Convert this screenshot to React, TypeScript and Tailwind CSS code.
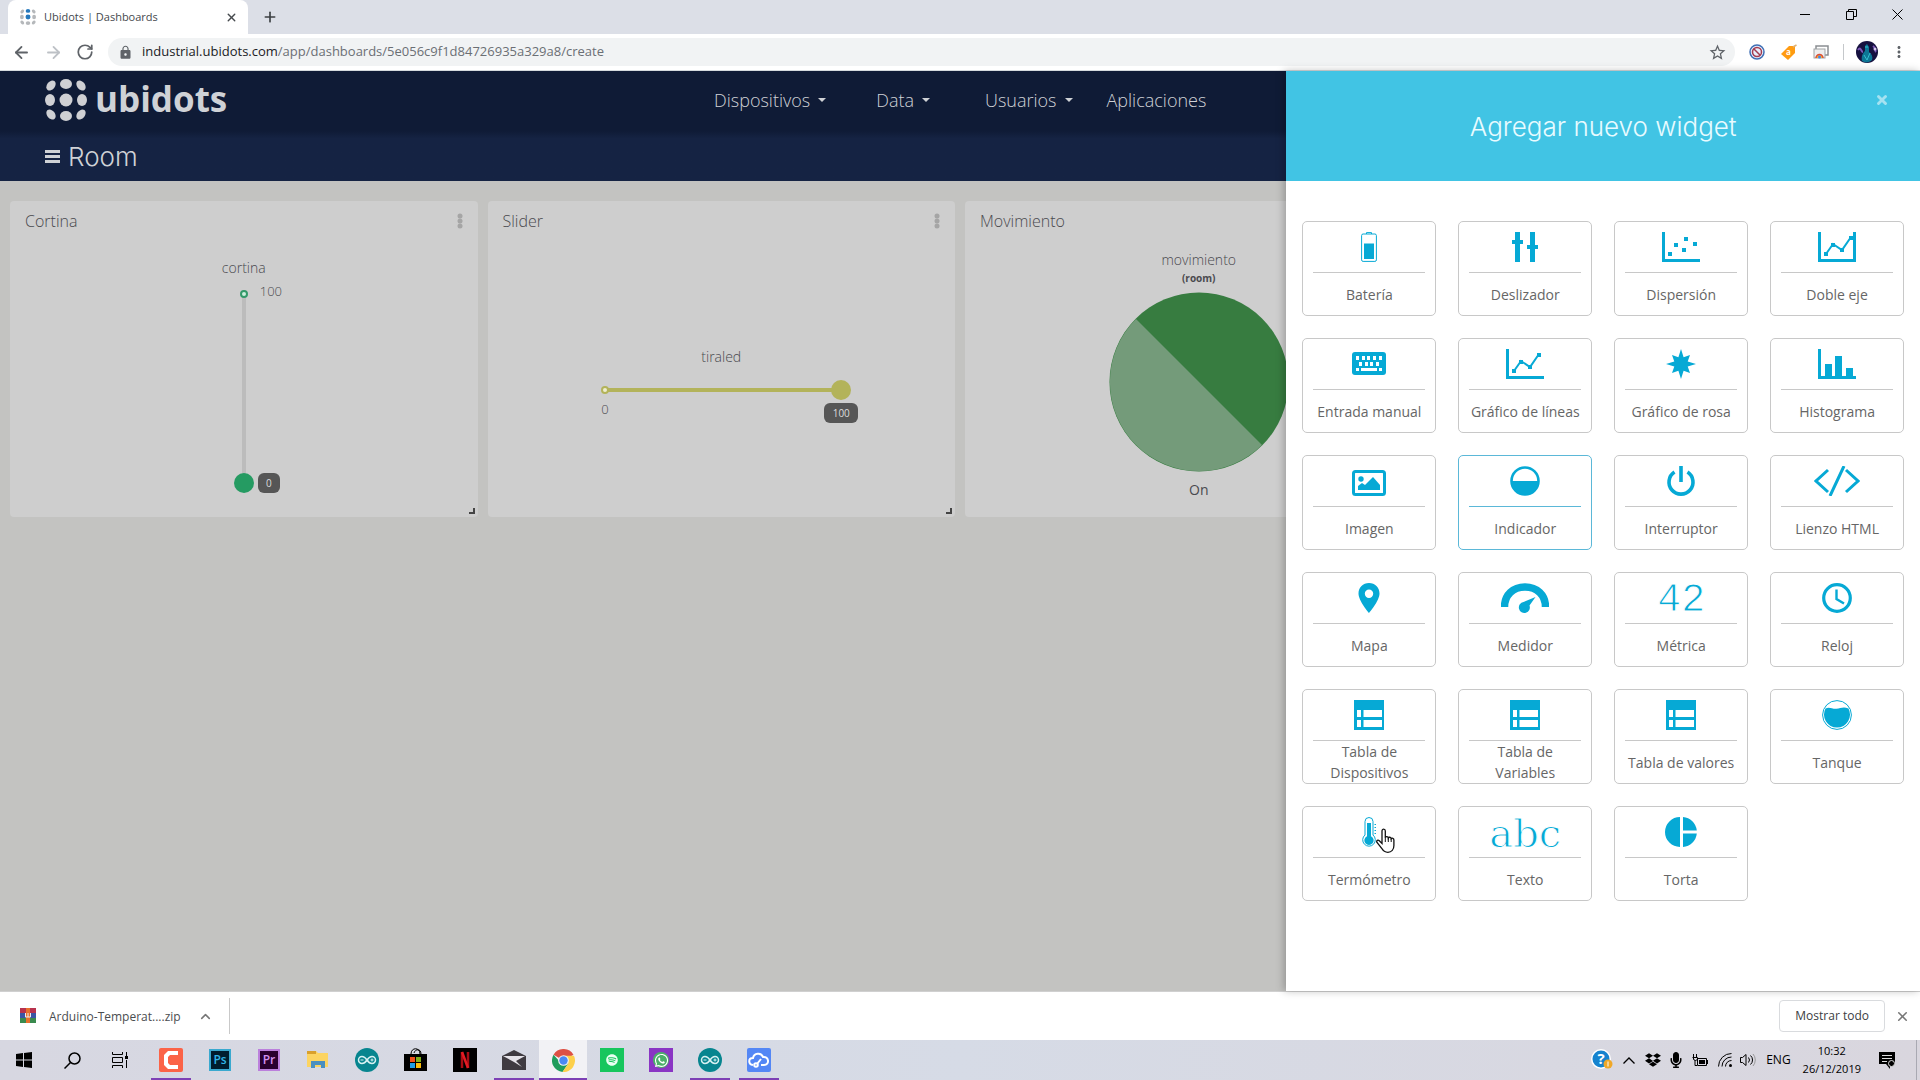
import type { ReactNode } from 'react';
import { FaDropbox, FaMicrophone, FaSpotify, FaWhatsapp } from 'react-icons/fa';
import { MdLock, MdMoreVert, MdStarBorder } from 'react-icons/md';
import { ArrowLeft, ArrowRight, ChevronUp, Plus, RotateCw, X } from 'lucide-react';

/* ---------- Widget icons ---------- */

const BatteryIcon = () => (
  <svg width="16" height="30" viewBox="0 0 16 30" fill="none" stroke="currentColor">
    <path d="M5.5 2V.6h5V2" />
    <rect x=".6" y="2" width="14.8" height="27.4" rx="1.5" />
    <rect x="3" y="11.5" width="10" height="15.5" fill="currentColor" stroke="none" />
  </svg>
);

const SlidersIcon = () => (
  <svg width="26" height="30" viewBox="0 0 26 30" fill="currentColor">
    <path d="M3 0h5v8h3v4H8v18H3V12H0V8h3zM18 0h5v13h3v4h-3v13h-5V17h-3v-4h3z" />
  </svg>
);

const ScatterIcon = () => (
  <svg width="38" height="30" viewBox="0 0 38 30" fill="currentColor">
    <path d="M0 0h3v27h35v3H0z" />
    <path d="M6 20h4v4H6zM12 11h4v4h-4zM20 16h4v4h-4zM22 5h4v4h-4zM31 10h4v4h-4z" />
  </svg>
);

const TrendLine = () => (
  <>
    <path d="M8 22 15 12l9 6 9-13" fill="none" stroke="currentColor" strokeWidth="2" />
    <path d="M6 20h4v4H6zM13 11h4v4h-4zM22 16h4v4h-4zM31 4h4v4h-4z" />
  </>
);

const DoubleAxisIcon = () => (
  <svg width="38" height="30" viewBox="0 0 38 30" fill="currentColor">
    <path d="M0 0h3v27h32V0h3v30H0z" />
    <TrendLine />
  </svg>
);

const LineChartIcon = () => (
  <svg width="38" height="30" viewBox="0 0 38 30" fill="currentColor">
    <path d="M0 0h3v27h35v3H0z" />
    <TrendLine />
  </svg>
);

const KeyboardIcon = () => (
  <svg width="34" height="30" viewBox="0 0 34 30">
    <rect y="3" width="34" height="23" rx="3" fill="currentColor" />
    <path
      fill="#fff"
      d="M4 7h3v4H4zM10 7h3v4h-3zM15 7h3v4h-3zM21 7h3v4h-3zM27 7h3v4h-3zM7 13h3v4H7zM13 13h3v4h-3zM18 13h3v4h-3zM24 13h3v4h-3zM4 19h3v3H4zM9 19h16v3H9zM27 19h3v3h-3z"
    />
  </svg>
);

const RoseIcon = () => (
  <svg width="30" height="30" viewBox="0 0 30 30" fill="currentColor">
    <path d="m15 0 2.600 8.300L24 6l-2.300 6.400L30 15l-8.300 2.600L24 24l-6.400-2.300L15 30l-2.600-8.300L6 24l2.300-6.400L0 15l8.300-2.600L6 6l6.400 2.300z" />
  </svg>
);

const HistogramIcon = () => (
  <svg width="38" height="30" viewBox="0 0 38 30" fill="currentColor">
    <path d="M0 0h3v27h4V15h7v12h3V7h7v20h4v-8h7v8h3v3H0z" />
  </svg>
);

const ImageIcon = () => (
  <svg width="34" height="30" viewBox="0 0 34 30" fill="currentColor">
    <rect x="1.500" y="5.500" width="31" height="23" rx="2" fill="none" stroke="currentColor" strokeWidth="3" />
    <circle cx="9" cy="13" r="2.700" />
    <path d="M6 24v-4l4-3 3 2 8-8 7 8v5z" />
  </svg>
);

const HalfCircleIcon = () => (
  <svg width="30" height="30" viewBox="0 0 30 30" fill="currentColor">
    <circle cx="15" cy="15" r="13.500" fill="none" stroke="currentColor" strokeWidth="2.600" />
    <path d="M1 15h28a14 14 0 0 1-28 0z" />
  </svg>
);

const PowerIcon = () => (
  <svg width="30" height="30" viewBox="0 0 30 30" fill="none" stroke="currentColor" strokeWidth="3.600">
    <path d="M15 0v16M8.500 6a12 12 0 1 0 13 0" />
  </svg>
);

const CodeIcon = () => (
  <svg width="46" height="30" viewBox="0 0 46 30" fill="none" stroke="currentColor" strokeWidth="3">
    <path d="M14 4 2 15l12 11M32 4l12 11-12 11M30 0 16 30" />
  </svg>
);

const PinIcon = () => (
  <svg width="22" height="30" viewBox="0 0 22 30" fill="currentColor">
    <path
      fillRule="evenodd"
      d="M11 0C5 0 .5 4.500.5 10.500.5 18 11 30 11 30s10.500-12 10.500-19.500C21.500 4.500 17 0 11 0zm0 6.500a4.200 4.200 0 1 1 0 8.400 4.200 4.200 0 0 1 0-8.400z"
    />
  </svg>
);

const GaugeIcon = () => (
  <svg width="48" height="30" viewBox="0 0 48 30" fill="currentColor">
    <path d="M3.500 24C3.500 12 12 4 24 4s20.500 8 20.500 20" fill="none" stroke="currentColor" strokeWidth="7.500" />
    <path d="M34.500 14 28.500 22.500a5.500 5.500 0 1 1-6-3.500z" />
  </svg>
);

const ClockIcon = () => (
  <svg width="30" height="30" viewBox="0 0 30 30" fill="none" stroke="currentColor">
    <circle cx="15" cy="15" r="13.300" strokeWidth="3.200" />
    <path d="M14.500 6.500V16l7.500 4.500" strokeWidth="2.400" />
  </svg>
);

const TableIcon = () => (
  <svg width="30" height="30" viewBox="0 0 30 30" fill="currentColor">
    <path fillRule="evenodd" d="M0 0h30v30H0zM3 10v7h4v-7zM9.500 10v7H28v-7zM3 20v7h4v-7zM9.500 20v7H28v-7z" />
  </svg>
);

const TankIcon = () => (
  <svg width="30" height="30" viewBox="0 0 30 30" fill="currentColor">
    <circle cx="15" cy="15" r="14.400" fill="none" stroke="currentColor" />
    <path d="M3.500 8.500c4-2 7 .8 11 .3s7-2.300 12-.3A13 13 0 1 1 3.500 8.500z" />
  </svg>
);

const ThermometerIcon = () => (
  <svg width="16" height="30" viewBox="0 0 16 30" fill="none" stroke="currentColor">
    <path d="M4 18V4.500a4 4 0 0 1 8 0V18a6.300 6.300 0 1 1-8 0z" />
    <path d="M6 6h4v13.200a4.600 4.600 0 1 1-4 0z" fill="currentColor" stroke="none" />
    <path d="M13.500 7.500H15M13.500 10.500H15M13.500 13.500H15M13.500 16.500H15" />
  </svg>
);

const PieIcon = () => (
  <svg width="32" height="30" viewBox="0 0 32 30" fill="currentColor">
    <path d="M15 0v30A15 15 0 0 1 15 0zM18 0a15 15 0 0 1 13.800 13.500H18zM18 16.500h13.800A15 15 0 0 1 18 30z" />
  </svg>
);

const HandCursor = () => (
  <svg width="19" height="25" viewBox="0 0 19 25" className="pointer-events-none absolute left-[73px] top-[21px]">
    <path
      d="M6 15.500V3c0-2.500 3.300-2.500 3.300 0v6.500c.4-1.300 2.800-1.200 3 .5.500-1.200 2.700-1 2.900.7.700-.9 2.700-.6 2.700 1.300v5.500c0 4-2.400 6.800-6 6.800-3.300 0-4.800-1.400-6.200-4L1 14.500c-1-2 1-3 2.300-1.700z"
      fill="#fff"
      stroke="#111"
      strokeWidth="1.300"
    />
    <path d="M9.300 9v5M12.300 10v4M15.200 11v3" stroke="#111" />
  </svg>
);

interface Widget {
  name: string;
  icon: ReactNode;
  active?: boolean;
  hovered?: boolean;
}

const widgets: Widget[] = [
  { name: 'Batería', icon: <BatteryIcon /> },
  { name: 'Deslizador', icon: <SlidersIcon /> },
  { name: 'Dispersión', icon: <ScatterIcon /> },
  { name: 'Doble eje', icon: <DoubleAxisIcon /> },
  { name: 'Entrada manual', icon: <KeyboardIcon /> },
  { name: 'Gráfico de líneas', icon: <LineChartIcon /> },
  { name: 'Gráfico de rosa', icon: <RoseIcon /> },
  { name: 'Histograma', icon: <HistogramIcon /> },
  { name: 'Imagen', icon: <ImageIcon /> },
  { name: 'Indicador', icon: <HalfCircleIcon />, active: true },
  { name: 'Interruptor', icon: <PowerIcon /> },
  { name: 'Lienzo HTML', icon: <CodeIcon /> },
  { name: 'Mapa', icon: <PinIcon /> },
  { name: 'Medidor', icon: <GaugeIcon /> },
  {
    name: 'Métrica',
    icon: (
      <span className="font-['Liberation_Mono',monospace] text-[40px] leading-9 [-webkit-text-stroke:1px_white]">42</span>
    ),
  },
  { name: 'Reloj', icon: <ClockIcon /> },
  { name: 'Tabla de Dispositivos', icon: <TableIcon /> },
  { name: 'Tabla de Variables', icon: <TableIcon /> },
  { name: 'Tabla de valores', icon: <TableIcon /> },
  { name: 'Tanque', icon: <TankIcon /> },
  { name: 'Termómetro', icon: <ThermometerIcon />, hovered: true },
  {
    name: 'Texto',
    icon: (
      <span className="font-['DejaVu_Serif',serif] text-[40px] leading-8 [-webkit-text-stroke:1px_white]">abc</span>
    ),
  },
  { name: 'Torta', icon: <PieIcon /> },
];

const WidgetTile = ({ widget }: { widget: Widget }) => {
  const line = widget.active ? 'border-[#5bb8d8]' : 'border-[#c8c8c8]';
  return (
    <button className={`relative flex h-[95px] flex-col rounded-[5px] border bg-white px-2.5 pt-2.5 ${line}`}>
      <span className={`flex h-[41px] w-full items-start justify-center border-b text-[#06a9d5] ${line}`}>
        {widget.icon}
      </span>
      <span className="flex flex-1 items-center justify-center self-stretch text-center text-sm leading-[21px] text-[#666]">
        {widget.name}
      </span>
      {widget.hovered && <HandCursor />}
    </button>
  );
};

/* ---------- Browser chrome ---------- */

const Dots = ({ size, colors }: { size: number; colors: string[] }) => (
  <svg width={size} height={size} viewBox="0 0 42 42">
    <ellipse cx="6" cy="6.500" rx="4" ry="5.600" transform="rotate(38 6 6.500)" fill={colors[0]} />
    <ellipse cx="21" cy="5" rx="6" ry="5" fill={colors[1]} />
    <ellipse cx="36" cy="6.500" rx="4" ry="5.600" transform="rotate(-38 36 6.500)" fill={colors[0]} />
    <ellipse cx="5" cy="21" rx="5" ry="6" fill={colors[0]} />
    <circle cx="21" cy="21" r="6.500" fill={colors[1]} />
    <ellipse cx="37" cy="21" rx="5" ry="6" fill={colors[0]} />
    <ellipse cx="6" cy="35.500" rx="4" ry="5.600" transform="rotate(-38 6 35.500)" fill={colors[0]} />
    <ellipse cx="21" cy="37" rx="6" ry="5" fill={colors[0]} />
    <ellipse cx="36" cy="35.500" rx="4" ry="5.600" transform="rotate(38 36 35.500)" fill={colors[0]} />
  </svg>
);

const TabBar = () => (
  <div className="flex h-[34px] items-stretch bg-[#dcdfe7] pl-2">
    <div className="flex w-60 items-center rounded-t-lg bg-white pl-3 pr-2.5 text-[11px] text-[#45494d]">
      <Dots size={16} colors={['#b5b8bb', '#2679bd']} />
      <span className="ml-2 flex-1">Ubidots | Dashboards</span>
      <button aria-label="Cerrar pestaña">
        <X size={13} strokeWidth={2.5} />
      </button>
    </div>
    <button aria-label="Nueva pestaña" className="ml-3.5 text-[#3c4043]">
      <Plus size={16} strokeWidth={2.5} />
    </button>
    <div className="ml-auto flex h-7 items-center text-black">
      <button aria-label="Minimizar" className="flex w-[46px] justify-center">
        <svg width="10" height="10" stroke="currentColor"><path d="M0 5.500h10" /></svg>
      </button>
      <button aria-label="Restaurar" className="flex w-[46px] justify-center">
        <svg width="11" height="11" fill="none" stroke="currentColor">
          <path d="M.5 2.500h7v8h-7zM2.500 2.500v-2h8v7h-3" />
        </svg>
      </button>
      <button aria-label="Cerrar" className="flex w-[46px] justify-center">
        <svg width="11" height="11" stroke="currentColor"><path d="m.5.500 10 10M10.500.500l-10 10" /></svg>
      </button>
    </div>
  </div>
);

const Toolbar = () => (
  <div className="flex h-[37px] items-center border-b border-[#d5dadd] bg-white pl-3 pr-3 text-[#5f6368]">
    <button aria-label="Atrás" className="w-8"><ArrowLeft size={19} strokeWidth={2.300} /></button>
    <button aria-label="Adelante" className="w-8 text-[#bdc1c6]"><ArrowRight size={19} strokeWidth={2.300} /></button>
    <button aria-label="Recargar" className="w-8"><RotateCw size={18} strokeWidth={2.300} /></button>
    <div className="flex h-7 flex-1 items-center rounded-full bg-[#f1f3f4] pl-2.5 pr-2">
      <MdLock size={15} />
      <p className="ml-[9px] flex-1 text-[13px] text-[#6b6f74]">
        <span className="text-[#202124]">industrial.ubidots.com</span>/app/dashboards/5e056c9f1d84726935a329a8/create
      </p>
      <button aria-label="Añadir a marcadores"><MdStarBorder size={19} /></button>
    </div>
    <div className="ml-3.5 flex items-center gap-4">
      <svg width="16" height="16" viewBox="0 0 16 16" fill="none">
        <circle cx="8" cy="8" r="7" fill="#e7eefb" stroke="#3f6fb5" strokeWidth="1.500" />
        <circle cx="8" cy="8" r="4.500" stroke="#a33b50" strokeWidth="1.500" />
        <path d="m5 5 6 6" stroke="#a33b50" strokeWidth="1.500" />
      </svg>
      <svg width="16" height="16" viewBox="0 0 16 16">
        <path d="M8 2h6v7l-7 7-7-6z" fill="#ff9b12" />
        <path d="m12 3 3.500-2" stroke="#e0b070" strokeWidth="1.500" />
        <text x="5" y="11" fontSize="8" fontWeight="700" fill="#fff">a</text>
      </svg>
      <svg width="16" height="16" viewBox="0 0 16 16" fill="none">
        <path d="M3 5V2h12v9h-3" stroke="#8b8e92" strokeWidth="1.500" />
        <rect x="1" y="5" width="11" height="9" fill="#eee" stroke="#a0a3a6" />
        <path d="M3 14a3.500 3.500 0 0 1 7 0" fill="#f4b92d" stroke="#dd4b39" strokeWidth="1.500" />
        <circle cx="6.500" cy="13" r="1.500" fill="#4285f4" />
      </svg>
    </div>
    <span className="ml-3.5 h-4 w-px bg-[#c5c8cb]" />
    <svg width="22" height="22" viewBox="0 0 22 22" className="ml-3">
      <circle cx="11" cy="11" r="11" fill="#16113f" />
      <path d="M2 9c3-4 3 2 5 2M17 5c3 2 2 5 3 6" stroke="#7c58b8" strokeWidth="2" fill="none" />
      <path d="M6 20c-1-5 1-8 3-10V5l2-2 2 3v5c3 2 4 5 3 8-3 3-7 3-10 1z" fill="#0d7695" />
      <path d="m8 14 3 5 3-7M9 6h3" stroke="#35bdd0" fill="none" />
      <circle cx="19" cy="8" r="1.500" fill="#d5c9ef" />
    </svg>
    <button aria-label="Menú" className="ml-3"><MdMoreVert size={18} /></button>
  </div>
);

/* ---------- Dashboard ---------- */

const NavLink = ({ label, caret = true, className = '' }: { label: string; caret?: boolean; className?: string }) => (
  <a href="#" className={`flex items-center gap-2 ${className}`}>
    {label}
    {caret && <svg width="8" height="4" fill="currentColor"><path d="M0 0h8L4 4z" /></svg>}
  </a>
);

const DashboardHeader = () => (
  <header className="text-[#cfd2d6]">
    <div className="flex h-[60px] items-center bg-[#0f1b36] pb-0.5 pl-[45px]">
      <a href="#" className="flex w-[669px] items-center gap-2">
        <Dots size={42} colors={['#cfd0d3', '#cfd0d3']} />
        <span className="pb-1 text-[35px] font-bold leading-none">ubidots</span>
      </a>
      <nav className="flex text-lg font-light">
        <NavLink label="Dispositivos" />
        <NavLink label="Data" className="ml-[50px]" />
        <NavLink label="Usuarios" className="ml-[55px]" />
        <NavLink label="Aplicaciones" caret={false} className="ml-[34px]" />
      </nav>
    </div>
    <div className="flex h-[50px] items-center bg-linear-to-b from-[#0f1b36] to-[#152343] to-15% pl-[45px]">
      <button aria-label="Tableros">
        <svg width="15" height="15" fill="currentColor"><path d="M0 1h15v3H0zM0 6h15v3H0zM0 11h15v3H0z" /></svg>
      </button>
      <h1 className="ml-2 pt-0.5 font-['Inter',sans-serif] text-[26px] font-light leading-8">Room</h1>
    </div>
  </header>
);

const Card = ({ title, children }: { title: string; children: ReactNode }) => (
  <section className="relative flex h-[316px] flex-col rounded-sm bg-[#cecece] text-[#4a4a4e]">
    <div className="flex h-10 items-center justify-between px-[15px]">
      <h2 className="font-light">{title}</h2>
      <button aria-label={`Opciones de ${title}`} className="flex text-[#a5a5a5]">
        <svg width="6" height="18" fill="currentColor">
          <circle cx="3" cy="4" r="2.500" />
          <circle cx="3" cy="9" r="2.500" />
          <circle cx="3" cy="14" r="2.500" />
        </svg>
      </button>
    </div>
    {children}
    <svg width="6" height="6" className="absolute bottom-[3px] right-[3px]" fill="#444">
      <path d="M4 0h2v6H0V4h4z" />
    </svg>
  </section>
);

const Tooltip = ({ className, children }: { className: string; children: ReactNode }) => (
  <span className={`absolute flex h-5 items-center justify-center rounded-md bg-[#565656] text-[10px] font-normal text-[#ddd] ${className}`}>
    {children}
  </span>
);

const Dashboard = () => (
  <main className="grid grid-cols-4 gap-2.5 px-2.5 py-5">
    <Card title="Cortina">
      <div className="flex flex-col items-center gap-1.5 pt-[17px] font-light">
        <label htmlFor="cortina" className="text-sm">cortina</label>
        <div className="relative h-[209px] w-5">
          <span className="absolute inset-x-2 inset-y-2.5 bg-[#bcbcbc]" />
          <span className="absolute left-1.5 top-1.5 size-2 rounded-full border-2 border-[#34996a] bg-[#cdeedd]" />
          <input
            id="cortina"
            type="range"
            defaultValue={0}
            className="absolute inset-0 h-full w-5 appearance-none bg-transparent [direction:rtl] [writing-mode:vertical-lr] [&::-webkit-slider-thumb]:size-5 [&::-webkit-slider-thumb]:appearance-none [&::-webkit-slider-thumb]:rounded-full [&::-webkit-slider-thumb]:bg-[#259b62]"
          />
          <span className="absolute -top-px left-[26px] text-[13px] leading-4">100</span>
          <Tooltip className="bottom-0 left-6 w-[22px]">0</Tooltip>
        </div>
      </div>
    </Card>

    <Card title="Slider">
      <div className="flex flex-1 flex-col items-center justify-center pt-3 font-light">
        <label htmlFor="tiraled" className="text-sm">tiraled</label>
        <div className="relative ml-1 mt-[13px] h-[43px] w-64">
          <span className="absolute inset-x-2.5 top-2 h-1 bg-[#b3b35a]" />
          <span className="absolute left-1.5 top-1.5 size-2 rounded-full border-2 border-[#b3b35a] bg-[#eeeed0]" />
          <input
            id="tiraled"
            type="range"
            defaultValue={100}
            className="absolute left-0 top-0 h-5 w-full appearance-none bg-transparent [&::-webkit-slider-thumb]:size-5 [&::-webkit-slider-thumb]:appearance-none [&::-webkit-slider-thumb]:rounded-full [&::-webkit-slider-thumb]:bg-[#b3b35a]"
          />
          <span className="absolute left-1.5 top-[21px] text-[13px] leading-4">0</span>
          <Tooltip className="-right-[7px] top-[23px] w-[34px]">100</Tooltip>
        </div>
      </div>
    </Card>

    <Card title="Movimiento">
      <div className="flex flex-col items-center pt-[9px]">
        <p className="text-sm font-light leading-5">movimiento</p>
        <p className="text-[10px] font-bold leading-4">(room)</p>
        <svg width="180" height="180" viewBox="0 0 180 180" className="mt-1.5">
          <circle cx="90" cy="90" r="89.500" fill="#377c40" />
          <path d="M27 27a89 89 0 1 0 126 126z" fill="#749b7a" />
        </svg>
        <p className="mt-2 text-sm leading-5">On</p>
      </div>
    </Card>
  </main>
);

const WidgetPanel = () => (
  <aside className="absolute inset-y-0 right-0 w-[33%] bg-white shadow-[-2px_0_8px_rgba(0,0,0,0.25)]">
    <div className="relative flex h-[110px] items-center justify-center bg-[#41c4e4]">
      <h2 className="pt-0.5 font-['Inter',sans-serif] text-[26px] font-light leading-8 text-[#e8fbff]">Agregar nuevo widget</h2>
      <button aria-label="Cerrar panel" className="absolute right-[31px] top-[22px] text-[#a5e2f1]">
        <X size={14} strokeWidth={5} />
      </button>
    </div>
    <div className="grid grid-cols-4 gap-[22px] px-4 pt-10">
      {widgets.map((widget) => (
        <WidgetTile key={widget.name} widget={widget} />
      ))}
    </div>
  </aside>
);

/* ---------- Downloads bar ---------- */

const DownloadBar = () => (
  <div className="flex h-[49px] items-center border-t border-[#d0d0d0] bg-white pl-5 pr-2.5">
    <button className="flex items-center text-xs text-[#4a4d50]">
      <svg width="16" height="16" viewBox="0 0 16 16">
        <path d="M0 0h16v5H0z" fill="#b8324e" />
        <path d="M0 5h16v5H0z" fill="#3b55a5" />
        <path d="M0 10h16v5H0z" fill="#3a8a4e" />
        <path d="M6 0h4v15H6z" fill="#e8702c" />
        <path d="M5.500 5v4h5V5M8 5v4" stroke="#eee" fill="none" />
      </svg>
      <span className="ml-[13px] pt-0.5">Arduino-Temperat....zip</span>
    </button>
    <button aria-label="Opciones de descarga" className="ml-[17px] text-[#777]">
      <ChevronUp size={15} strokeWidth={2.500} />
    </button>
    <span className="ml-4 h-9 w-px bg-[#c9c9c9]" />
    <button className="ml-auto h-8 rounded border border-[#d9dbde] px-[15px] text-xs font-medium text-[#3c4043]">Mostrar todo</button>
    <button aria-label="Cerrar descargas" className="ml-2.5 text-[#777]">
      <X size={15} strokeWidth={2.500} />
    </button>
  </div>
);

/* ---------- Taskbar ---------- */

const ArduinoLogo = () => (
  <svg width="24" height="24" viewBox="0 0 24 24" fill="none">
    <circle cx="12" cy="12" r="12" fill="#07858f" />
    <path d="M12 12c-2-3-3.500-3.500-5-3.500a3.500 3.500 0 0 0 0 7c1.500 0 3-.5 5-3.500s3.500-3.500 5-3.500a3.500 3.500 0 0 1 0 7c-1.500 0-3-.5-5-3.500z" stroke="#d7f1f2" strokeWidth="1.500" />
    <path d="M5.500 12h3M15.500 12h3M17 10.500v3" stroke="#d7f1f2" />
  </svg>
);

const taskbarApps: { name: string; icon: ReactNode; bar?: string; tile?: string }[] = [
  {
    name: 'Camtasia',
    bar: 'w-10',
    icon: (
      <svg width="24" height="24" viewBox="0 0 24 24">
        <rect width="24" height="24" rx="2" fill="#fb6347" />
        <path d="M19 3H9L5 7v10l4 4h10v-4h-8l-2-2V9l2-2h8z" fill="#fff" />
      </svg>
    ),
  },
  {
    name: 'Photoshop',
    icon: <span className="flex size-[22px] items-center justify-center border-2 border-[#3ba9cf] bg-[#001d2e] text-xs font-semibold text-[#31b6e8]">Ps</span>,
  },
  {
    name: 'Premiere',
    icon: <span className="flex size-[22px] items-center justify-center border-2 border-[#bb80dc] bg-[#29002f] text-xs font-semibold text-[#d291f0]">Pr</span>,
  },
  {
    name: 'Explorador',
    icon: (
      <svg width="22" height="20" viewBox="0 0 22 20">
        <path d="M0 1h9l2 2h10v14H0z" fill="#fcd462" />
        <path d="M0 1h9v3H0z" fill="#d9a02c" />
        <path d="M4 18v-7h14v7h-4v-3H8v3z" fill="#4a8fc0" />
      </svg>
    ),
  },
  { name: 'Arduino', icon: <ArduinoLogo /> },
  {
    name: 'Store',
    icon: (
      <svg width="24" height="24" viewBox="0 0 24 24">
        <path d="M0 6h23v17H0z" />
        <path d="M7 6c0-7 9-7 9 0M10 5c1-4 7-5 7 1" fill="none" stroke="#000" />
        <path d="M6 9h5v5H6z" fill="#f1511b" />
        <path d="M12 9h5v5h-5z" fill="#80b01c" />
        <path d="M6 15h5v5H6z" fill="#1b9de8" />
        <path d="M12 15h5v5h-5z" fill="#fbbc09" />
      </svg>
    ),
  },
  {
    name: 'Netflix',
    icon: (
      <svg width="24" height="24" viewBox="0 0 24 24" fill="none">
        <path d="M0 0h24v24H0z" fill="#000" />
        <path d="M9 4v16M15 4v16" stroke="#a70d14" strokeWidth="2.500" />
        <path d="m9 4 6 16" stroke="#e31b23" strokeWidth="2.500" />
      </svg>
    ),
  },
  {
    name: 'Correo',
    bar: 'w-10',
    icon: (
      <svg width="24" height="20" viewBox="0 0 24 20">
        <path d="M0 6 12 0l12 6v14H0z" fill="#3f3b41" />
        <path d="m1 6 22 0-9 5 6 6-8-5z" fill="#e6e4ea" />
      </svg>
    ),
  },
  {
    name: 'Chrome',
    bar: 'w-12',
    tile: 'bg-[#f2f2f5]',
    icon: (
      <svg width="23" height="23" viewBox="0 0 24 24">
        <path d="M12 12 1.600 6A12 12 0 0 1 22.400 6z" fill="#dd5144" />
        <path d="M12 12h-5L1.600 6A12 12 0 0 0 11 24l6-9z" fill="#1f9d5c" />
        <path d="M12 7h10.900A12 12 0 0 1 11 24l6-9z" fill="#fdd04b" />
        <circle cx="12" cy="12" r="5.600" fill="#f3f3f3" />
        <circle cx="12" cy="12" r="4.400" fill="#4a89f3" />
      </svg>
    ),
  },
  {
    name: 'Spotify',
    icon: <span className="flex size-6 items-center justify-center bg-[#17c65d] text-[#e9fff2]"><FaSpotify size={12} /></span>,
  },
  {
    name: 'WhatsApp',
    icon: (
      <span className="flex size-6 items-center justify-center bg-[#8a35c4] text-white">
        <span className="flex size-4 items-center justify-center rounded-full bg-[#4caf6a]"><FaWhatsapp size={15} /></span>
      </span>
    ),
  },
  { name: 'Arduino IDE', bar: 'w-10', icon: <ArduinoLogo /> },
  {
    name: 'Nube',
    bar: 'w-10',
    icon: (
      <svg width="24" height="24" viewBox="0 0 24 24" fill="none" stroke="#fff" strokeWidth="2">
        <rect width="24" height="24" rx="2" fill="#5487f5" stroke="none" />
        <path d="M6 17c-5-1-5-7 0-7 1-5 8-6 10-1 6-1 7 8 1 8h-3M14 11l-4 5" />
        <circle cx="9" cy="17" r="1.800" />
      </svg>
    ),
  },
];

const Taskbar = () => (
  <footer className="flex h-10 bg-linear-to-r from-[#d7d7e1] via-[#d6dbe6] to-[#d9d6de] text-black">
    <button aria-label="Inicio" className="flex w-12 items-center justify-center">
      <svg width="16" height="16"><path d="m0 2 7-1v6.500H0zM8 1l8-1v7.500H8zM0 8.500h7V15l-7-1zM8 8.500h8V16l-8-1z" /></svg>
    </button>
    <button aria-label="Buscar" className="flex w-12 items-center justify-center">
      <svg width="17" height="17" fill="none" stroke="currentColor" strokeWidth="1.500">
        <circle cx="10.500" cy="6.500" r="5.500" />
        <path d="m6.500 10.500-6 6" />
      </svg>
    </button>
    <button aria-label="Vista de tareas" className="flex w-12 items-center justify-center">
      <svg width="17" height="16" fill="none" stroke="currentColor">
        <path d="M.5 0v2.500h10V0M.5 16v-2.500h10V16M.5 5.500h10v5H.5zM14.500 0v4M14.500 8v8" />
        <path d="M13 4h3v3h-3z" fill="currentColor" stroke="none" />
      </svg>
    </button>
    <div className="ml-[3px] flex gap-px">
      {taskbarApps.map((app) => (
        <button
          key={app.name}
          aria-label={app.name}
          className={`relative flex w-12 items-center justify-center ${app.tile ?? ''}`}
        >
          {app.icon}
          {app.bar && <span className={`absolute bottom-0 h-0.5 bg-[#7d40b5] ${app.bar}`} />}
        </button>
      ))}
    </div>

    <div className="ml-auto flex items-center">
      <svg width="23" height="22" viewBox="0 0 23 22">
        <circle cx="11" cy="10" r="10" fill="#fff" />
        <circle cx="11" cy="10" r="8.500" fill="#1583cf" />
        <text x="11" y="15" textAnchor="middle" fontSize="15" fontWeight="700" fill="#fff">?</text>
        <circle cx="18" cy="15" r="4.500" fill="#f0a828" />
        <path d="M18 12.500v5" stroke="#fff" />
      </svg>
      <svg width="12" height="7" className="ml-2.5" fill="none" stroke="currentColor" strokeWidth="1.300"><path d="m.5 6.500 5.500-5.500 5.500 5.500" /></svg>
      <FaDropbox size={16} className="ml-2.5" />
      <FaMicrophone size={16} className="ml-[7px]" />
      <svg width="16" height="13" className="ml-2" fill="none" stroke="currentColor">
        <path d="M5.500 4.500h9v7h-9z" />
        <path d="M7 6h6v4H7zM15 6h1v4h-1z" fill="currentColor" stroke="none" />
        <path d="M1.500 0v3M4.500 0v3M.5 3.500h5v2l-2 1-2-1v-2M3 6v5.500h2" />
      </svg>
      <svg width="14" height="14" className="ml-2.5" fill="none" stroke="currentColor">
        <path d="M.5 13.500A13 13 0 0 1 13.500 .5M4 13.500a9.500 9.500 0 0 1 9.500-9.500M7.500 13.500a6 6 0 0 1 6-6" />
        <circle cx="12.500" cy="12.500" r="1.500" fill="currentColor" stroke="none" />
      </svg>
      <svg width="16" height="14" className="ml-2" fill="none" stroke="currentColor">
        <path d="M.5 4.500h2l3.500-3v11l-3.500-3h-2zM8.500 4.500a4 4 0 0 1 0 5M10.500 2.500a6 6 0 0 1 0 9" />
        <path d="M13 1a9 9 0 0 1 0 12" stroke="#999" />
      </svg>
      <span className="ml-2.5 text-xs">ENG</span>
      <div className="ml-3 text-center text-[11px] leading-[18px]">
        <p>10:32</p>
        <p>26/12/2019</p>
      </div>
      <svg width="17" height="17" className="ml-[18px]">
        <path d="M0 0h16v12h-5v5l-4-5H0z" />
        <path d="M3 3.500h10M3 6.500h10M3 9.500h5" stroke="#ddd" />
        <circle cx="12.500" cy="11.500" r="3" fill="#000" stroke="#ddd" />
      </svg>
      <span className="ml-5 mr-[3px] h-10 w-px bg-[#a9a9b2]" />
    </div>
  </footer>
);

export default function App() {
  return (
    <div className="flex h-screen flex-col overflow-hidden font-['Open_Sans',sans-serif]">
      <TabBar />
      <Toolbar />
      <div className="relative flex-1 bg-[#c3c3c1]">
        <DashboardHeader />
        <Dashboard />
        <WidgetPanel />
      </div>
      <DownloadBar />
      <Taskbar />
    </div>
  );
}
